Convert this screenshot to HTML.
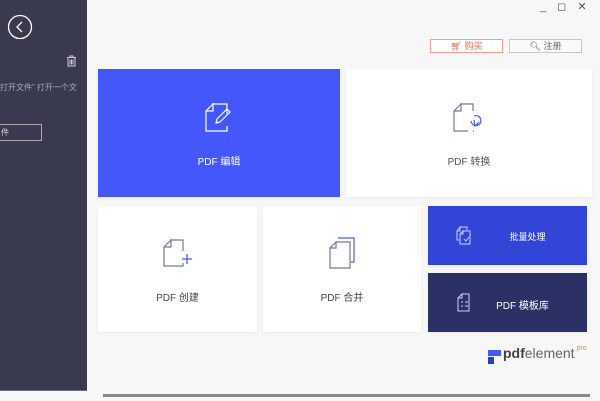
<!DOCTYPE html>
<html><head><meta charset="utf-8"><style>
*{margin:0;padding:0;box-sizing:border-box}
body{width:600px;height:401px;overflow:hidden;background:#f7f7f7;position:relative;font-family:"Liberation Sans","Noto Sans CJK SC",sans-serif}
.side{position:absolute;left:0;top:0;width:87px;height:391px;background:#393a50;border-bottom:1px solid #6a6c88}
.card{position:absolute;box-shadow:0 1px 3px rgba(0,0,0,.06)}
.lbl{position:absolute;left:0;right:0;text-align:center;font-size:10px}
svg{position:absolute}
.btn{position:absolute;top:39px;height:14px;font-size:9px;text-align:center;line-height:12px}
</style></head><body>
<div class="side">
 <svg style="left:7px;top:14px" width="26" height="26" viewBox="0 0 26 26"><circle cx="13" cy="13" r="11.5" fill="none" stroke="#fff" stroke-width="1.3"/><path d="M15 8 L10 13 L15 18" fill="none" stroke="#fff" stroke-width="1.3"/></svg>
 <svg style="left:66px;top:55px" width="11" height="12" viewBox="0 0 11 12"><path d="M1 2.5H10M4 2.5V1H7V2.5M2 2.5V11H9V2.5M4 4.5V9.5M5.5 4.5V9.5M7 4.5V9.5" fill="none" stroke="#ccc" stroke-width="1"/></svg>
 <div style="position:absolute;left:0;top:82px;font-size:8px;color:#a8a9b8;white-space:nowrap">打开文件” 打开一个文</div>
 <div style="position:absolute;left:-4px;top:124px;width:46px;height:17px;border:1px solid #aaa;font-size:8px;color:#ddd;line-height:15px;padding-left:4px">件</div>
</div>
<div style="position:absolute;left:540px;top:0;font-size:11px;color:#555;letter-spacing:4px">_ ◻ ✕</div>
<div class="btn" style="left:430px;width:73px;border:1px solid #f4a08e;color:#ee6a50;background:#fff">🛒︎ 购买</div>
<div class="btn" style="left:509px;width:73px;border:1px solid #c8c8c8;color:#666;background:#fafafa">🔍︎ 注册</div>
<div class="card" style="left:98px;top:69px;width:242px;height:128px;background:#4357fb">
 <svg style="left:107px;top:34px" width="28" height="29" viewBox="0 0 28 29"><path d="M7 1H22V11M22 23V28H1V8L8 1V8H1" fill="none" stroke="#fff" stroke-width="1.2"/><path d="M11 20L12 16L22 6L25 9L15 19Z" fill="none" stroke="#fff" stroke-width="1.2"/></svg>
 <div class="lbl" style="top:84px;color:#fff">PDF 编辑</div>
</div>
<div class="card" style="left:346px;top:69px;width:246px;height:128px;background:#fff">
 <svg style="left:107px;top:34px" width="30" height="29" viewBox="0 0 30 29"><path d="M7 1H20V8M15 28H1V8L8 1V8H1M20 28H21" fill="none" stroke="#757a9c" stroke-width="1.2"/><path d="M18 18A5 5 0 1 0 21 13M21 17L22 23L26 19" fill="none" stroke="#4b5cf0" stroke-width="1.2"/></svg>
 <div class="lbl" style="top:84px;color:#555">PDF 转换</div>
</div>
<div class="card" style="left:98px;top:206px;width:159px;height:126px;background:#fff">
 <svg style="left:65px;top:33px" width="30" height="28" viewBox="0 0 30 28"><path d="M7 1H20V12M15 27H1V8L8 1V8H1M15 27H20V24" fill="none" stroke="#757a9c" stroke-width="1.2"/><path d="M24 15V25M19 20H29" stroke="#4b5cf0" stroke-width="1.3"/></svg>
 <div class="lbl" style="top:83px;color:#444">PDF 创建</div>
</div>
<div class="card" style="left:263px;top:206px;width:158px;height:126px;background:#fff">
 <svg style="left:66px;top:30px" width="28" height="33" viewBox="0 0 28 33"><path d="M9 2H25V26H22" fill="none" stroke="#4b5cf0" stroke-width="1.2"/><path d="M7 6H21V32H1V12L7 6V12H1" fill="none" stroke="#757a9c" stroke-width="1.2"/></svg>
 <div class="lbl" style="top:83px;color:#444">PDF 合并</div>
</div>
<div class="card" style="left:428px;top:206px;width:159px;height:59px;background:#3345d6">
 <svg style="left:28px;top:20px" width="18" height="19" viewBox="0 0 18 19"><path d="M4 1H11V4M3 14H1V5L4 1V5H1" fill="none" stroke="#c8cdfa" stroke-width="1"/><path d="M7 5H14V18H4V8L7 5V8H4M8 13L10 15L13 11" fill="none" stroke="#c8cdfa" stroke-width="1"/></svg>
 <div class="lbl" style="top:24px;left:40px;color:#fff;font-size:9px">批量处理</div>
</div>
<div class="card" style="left:428px;top:273px;width:159px;height:59px;background:#2c3165">
 <svg style="left:29px;top:20px" width="16" height="19" viewBox="0 0 16 19"><path d="M5 1H12V18H1V5L5 1V5H1M4 9H6M4 13H6M8 9H11M8 13H11" fill="none" stroke="#c8cdfa" stroke-width="1"/></svg>
 <div class="lbl" style="top:24px;left:30px;color:#fff;font-size:10px">PDF 模板库</div>
</div>
<div style="position:absolute;left:488px;top:350px;width:9px;height:6px;background:#4357fb"></div>
<div style="position:absolute;left:497px;top:350px;width:4px;height:6px;background:#4357fb"></div>
<div style="position:absolute;left:488px;top:357px;width:6px;height:7px;background:#2c3fbe"></div>
<div style="position:absolute;left:503px;top:345px;font-size:14px;color:#444;font-weight:bold">pdf<span style="font-weight:normal;color:#666">element</span><sup style="font-size:7px;color:#f08a3a;font-weight:normal;vertical-align:8px"> pro</sup></div>
<div style="position:absolute;left:103px;top:394px;width:487px;height:3px;background:#8a8a8a"></div>
</body></html>
